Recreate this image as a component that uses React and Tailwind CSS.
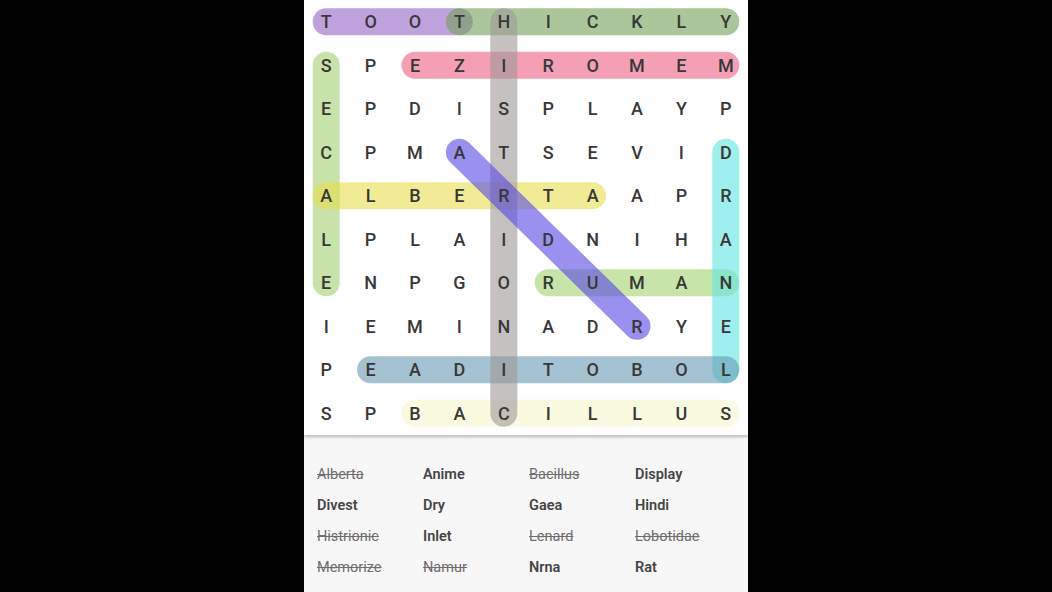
import React from 'react';

const rows = [
  'TOOTHICKLY',
  'SPEZIROMEM',
  'EPDISPLAYP',
  'CPMATSEVID',
  'ALBERTAAPR',
  'LPLAIDNIHA',
  'ENPGORUMAN',
  'IEMINADRYE',
  'PEADITOBOL',
  'SPBACILLUS',
];

const CW = 44.4;
const CH = 43.5;

// [r1, c1, r2, c2, color]
const marks = [
  [9, 2, 9, 9, 'rgb(247,247,205)'],
  [0, 0, 0, 3, 'rgb(150,100,200)'],
  [0, 3, 0, 9, 'rgb(113,163,88)'],
  [1, 2, 1, 9, 'rgb(237,97,130)'],
  [1, 0, 6, 0, 'rgb(163,210,113)'],
  [4, 0, 4, 6, 'rgb(233,223,80)'],
  [6, 5, 6, 9, 'rgb(163,213,113)'],
  [3, 9, 8, 9, 'rgb(97,230,227)'],
  [8, 1, 8, 9, 'rgb(105,155,180)'],
  [0, 4, 9, 4, 'rgb(160,153,153)'],
  [3, 3, 7, 7, 'rgb(88,72,230)'],
];

const words = [
  ['Alberta', true], ['Anime', false], ['Bacillus', true], ['Display', false],
  ['Divest', false], ['Dry', false], ['Gaea', false], ['Hindi', false],
  ['Histrionic', true], ['Inlet', false], ['Lenard', true], ['Lobotidae', true],
  ['Memorize', true], ['Namur', true], ['Nrna', false], ['Rat', false],
  ['Rudra', true], ['Secale', true], ['Thickly', true], ['Tooth', true],
];

const Board = () => (
  <div className="relative h-[435px] bg-white shadow-[0_2px_3px_rgba(0,0,0,0.25)] z-10">
    <svg className="absolute inset-0" width="444" height="435" viewBox="0 0 444 435">
      {marks.map(([r1, c1, r2, c2, color], i) => (
        <line
          key={i}
          x1={c1 * CW + CW / 2}
          y1={r1 * CH + CH / 2}
          x2={c2 * CW + CW / 2}
          y2={r2 * CH + CH / 2}
          stroke={color}
          strokeWidth="27"
          strokeLinecap="round"
          opacity="0.6"
        />
      ))}
    </svg>
    <div className="relative grid grid-cols-10 grid-rows-10 h-full">
      {rows.map((row, r) =>
        row.split('').map((ch, c) => (
          <div
            key={`${r}-${c}`}
            className="flex items-center justify-center text-[18px] font-medium text-[#383838]"
          >
            {ch}
          </div>
        ))
      )}
    </div>
  </div>
);

const WordList = () => (
  <div className="bg-[#f7f7f7] pt-[24px] pl-[13px] pr-[7px] grid grid-cols-4">
    {words.map(([w, found]) => (
      <div
        key={w}
        className={
          found
            ? 'h-[31px] flex items-center text-[14.5px] text-[#6e6e6e] line-through'
            : 'h-[31px] flex items-center text-[14.5px] font-semibold text-[#454545]'
        }
      >
        {w}
      </div>
    ))}
  </div>
);

export default function App() {
  return (
    <div className="w-[1052px] h-[592px] bg-black overflow-hidden flex justify-center font-['Roboto',sans-serif]">
      <div className="w-[444px] h-full bg-[#f7f7f7] overflow-hidden">
        <Board />
        <WordList />
      </div>
    </div>
  );
}
